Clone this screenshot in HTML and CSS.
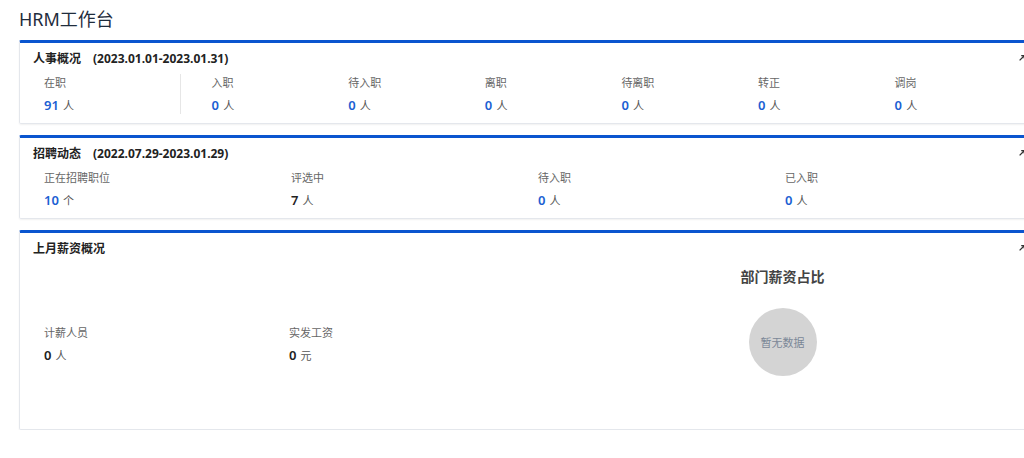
FILE: index.html
```html
<!DOCTYPE html>
<html lang="zh-CN">
<head>
    <meta charset="UTF-8">
    <meta name="viewport" content="width=device-width, initial-scale=1.0">
    <title>HRM工作台</title>
    <link rel="stylesheet" href="styles.css">
</head>
<body>
    <h1 class="page-title">HRM工作台</h1>

    <div class="card">
        <div class="card-head">
            <span class="card-title">人事概况</span>
            <span class="card-range">(2023.01.01-2023.01.31)</span>
            <svg class="expand" viewBox="0 0 10 10"><path d="M2 8 L7.5 2.5 M4 2 H8 V6" fill="none" stroke="#333" stroke-width="1.6"/></svg>
        </div>
        <div class="stats stats-hr">
            <div class="stat first">
                <div class="stat-label">在职</div>
                <div class="stat-value"><b>91</b> <span>人</span></div>
            </div>
            <div class="stat">
                <div class="stat-label">入职</div>
                <div class="stat-value"><b>0</b> <span>人</span></div>
            </div>
            <div class="stat">
                <div class="stat-label">待入职</div>
                <div class="stat-value"><b>0</b> <span>人</span></div>
            </div>
            <div class="stat">
                <div class="stat-label">离职</div>
                <div class="stat-value"><b>0</b> <span>人</span></div>
            </div>
            <div class="stat">
                <div class="stat-label">待离职</div>
                <div class="stat-value"><b>0</b> <span>人</span></div>
            </div>
            <div class="stat">
                <div class="stat-label">转正</div>
                <div class="stat-value"><b>0</b> <span>人</span></div>
            </div>
            <div class="stat">
                <div class="stat-label">调岗</div>
                <div class="stat-value"><b>0</b> <span>人</span></div>
            </div>
        </div>
    </div>

    <div class="card">
        <div class="card-head">
            <span class="card-title">招聘动态</span>
            <span class="card-range">(2022.07.29-2023.01.29)</span>
            <svg class="expand" viewBox="0 0 10 10"><path d="M2 8 L7.5 2.5 M4 2 H8 V6" fill="none" stroke="#333" stroke-width="1.6"/></svg>
        </div>
        <div class="stats stats-recruit">
            <div class="stat">
                <div class="stat-label">正在招聘职位</div>
                <div class="stat-value"><b>10</b> <span>个</span></div>
            </div>
            <div class="stat">
                <div class="stat-label">评选中</div>
                <div class="stat-value dark"><b>7</b> <span>人</span></div>
            </div>
            <div class="stat">
                <div class="stat-label">待入职</div>
                <div class="stat-value"><b>0</b> <span>人</span></div>
            </div>
            <div class="stat">
                <div class="stat-label">已入职</div>
                <div class="stat-value"><b>0</b> <span>人</span></div>
            </div>
        </div>
    </div>

    <div class="card">
        <div class="card-head">
            <span class="card-title">上月薪资概况</span>
            <svg class="expand" viewBox="0 0 10 10"><path d="M2 8 L7.5 2.5 M4 2 H8 V6" fill="none" stroke="#333" stroke-width="1.6"/></svg>
        </div>
        <div class="salary">
            <div class="stats stats-salary">
                <div class="stat">
                    <div class="stat-label">计薪人员</div>
                    <div class="stat-value dark"><b>0</b> <span>人</span></div>
                </div>
                <div class="stat">
                    <div class="stat-label">实发工资</div>
                    <div class="stat-value dark"><b>0</b> <span>元</span></div>
                </div>
            </div>
            <div class="chart">
                <div class="chart-title">部门薪资占比</div>
                <div class="empty">暂无数据</div>
            </div>
        </div>
    </div>
</body>
</html>
```

FILE: styles.css
```css
body {
    margin: 0;
    padding: 6px 0 0 19px;
    font-family: "Noto Sans", "Noto Sans CJK SC", sans-serif;
    background-color: #fff;
    color: #333;
    overflow: hidden;
}
.page-title {
    margin: 0;
    font-size: 18px;
    font-weight: 400;
    line-height: 26px;
    color: #1f2d3d;
}
.card {
    width: 1024px;
    margin-top: 8px;
    padding: 0 13px 9px;
    box-sizing: border-box;
    border: 1px solid #e4e7ec;
    border-top: 3px solid #0a55cf;
    border-radius: 2px;
    box-shadow: 0 1px 2px rgba(0, 0, 0, 0.06);
}
.card + .card {
    margin-top: 11px;
}
.card-head {
    display: flex;
    align-items: center;
    height: 20px;
    padding-top: 5px;
}
.card-title {
    font-size: 12px;
    font-weight: 700;
    color: #222;
}
.card-range {
    margin-left: 12px;
    font-size: 12px;
    font-weight: 700;
    color: #222;
}
.expand {
    width: 8px;
    height: 8px;
    margin-left: auto;
    margin-right: 3px;
}
.stats {
    display: grid;
    margin-top: 6px;
    padding-left: 11px;
}
.stats-hr {
    grid-template-columns: repeat(7, 136.6px);
}
.stats-recruit {
    grid-template-columns: repeat(4, 247px);
}
.stats-salary {
    grid-template-columns: repeat(2, 245px);
    margin-top: 0;
}
.stats-hr .stat {
    padding-left: 31px;
}
.stats-hr .stat.first {
    padding-left: 0;
    border-right: 1px solid #e6e6e6;
}
.stat-label {
    height: 16px;
    margin-top: 1px;
    font-size: 11px;
    line-height: 16px;
    color: #666;
}
.stat-value {
    height: 20px;
    margin-top: 3px;
    line-height: 20px;
    color: #1c5fd3;
}
.stat-value b {
    font-size: 13px;
    font-weight: 600;
}
.stat-value span {
    font-size: 11px;
    color: #555;
}
.stat-value.dark {
    color: #222;
}
.salary {
    display: flex;
    height: 171px;
    margin-bottom: -9px;
}
.salary .stats-salary {
    width: 488px;
    align-self: center;
}
.chart {
    flex: 1;
    display: flex;
    flex-direction: column;
    align-items: center;
    padding-top: 9px;
    padding-left: 4px;
}
.chart-title {
    font-size: 14px;
    font-weight: 700;
    line-height: 20px;
    color: #444;
}
.empty {
    display: flex;
    align-items: center;
    justify-content: center;
    width: 68px;
    height: 68px;
    margin-top: 21px;
    border-radius: 50%;
    background-color: #d4d4d4;
    font-size: 11px;
    color: #7b8797;
}
```
